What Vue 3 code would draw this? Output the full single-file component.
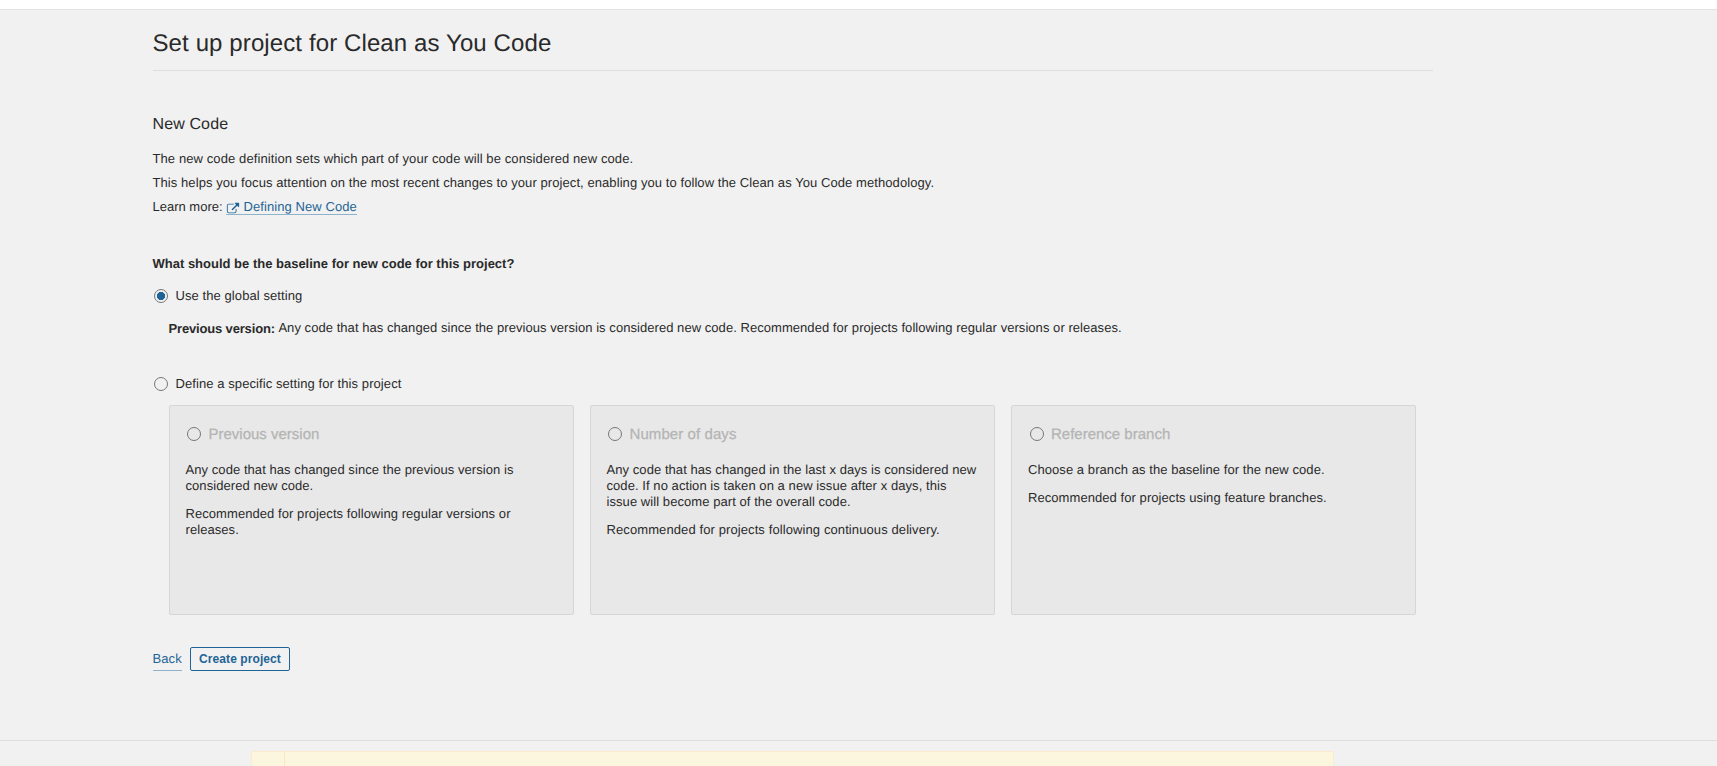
<script setup>
const options = [
  {
    title: 'Previous version',
    kind: 'version',
    paragraphs: [
      ['Any code that has changed since the previous version is', 'considered new code.'],
      ['Recommended for projects following regular versions or', 'releases.'],
    ],
  },
  {
    title: 'Number of days',
    kind: 'days',
    paragraphs: [
      [
        'Any code that has changed in the last x days is considered new',
        'code. If no action is taken on a new issue after x days, this',
        'issue will become part of the overall code.',
      ],
      ['Recommended for projects following continuous delivery.'],
    ],
  },
  {
    title: 'Reference branch',
    kind: 'branch',
    paragraphs: [
      ['Choose a branch as the baseline for the new code.'],
      ['Recommended for projects using feature branches.'],
    ],
  },
]
</script>

<template>
  <div class="page">
    <div class="topbar"></div>
    <main class="content">
      <header class="page-header">
        <h1>Set up project for Clean as You Code</h1>
      </header>

      <h2>New Code</h2>
      <div class="intro">
        <p class="definition">The new code definition sets which part of your code will be considered new code.</p>
        <p class="help">This helps you focus attention on the most recent changes to your project, enabling you to follow the Clean as You Code methodology.</p>
        <p class="learn">
          <span>Learn more:</span>
          <a class="doc-link">
            <svg class="external" width="14" height="14" viewBox="0 0 16 16">
              <path
                fill="currentColor"
                d="M12 9.25v2.5A2.25 2.25 0 0 1 9.75 14h-6.5A2.25 2.25 0 0 1 1 11.75v-6.5A2.25 2.25 0 0 1 3.25 3h5.5c.14 0 .25.11.25.25v.5c0 .14-.11.25-.25.25h-5.5C2.562 4 2 4.563 2 5.25v6.5c0 .688.563 1.25 1.25 1.25h6.5c.688 0 1.25-.563 1.25-1.25v-2.5c0-.14.11-.25.25-.25h.5c.14 0 .25.11.25.25zm3-6.75v4c0 .273-.227.5-.5.5a.497.497 0 0 1-.352-.148l-1.375-1.375L7.68 10.57a.27.27 0 0 1-.18.078.27.27 0 0 1-.18-.078l-.89-.89a.27.27 0 0 1-.078-.18.27.27 0 0 1 .078-.18l5.093-5.093-1.375-1.375A.497.497 0 0 1 10 2.5c0-.273.227-.5.5-.5h4c.273 0 .5.227.5.5z"
              />
            </svg>
            <span>Defining New Code</span>
          </a>
        </p>
      </div>

      <p class="question">What should be the baseline for new code for this project?</p>

      <div class="choice">
        <span class="radio checked"></span>
        <span class="choice-label">Use the global setting</span>
      </div>
      <p class="current">
        <strong>Previous version:</strong>
        <span>Any code that has changed since the previous version is considered new code. Recommended for projects following regular versions or releases.</span>
      </p>
      <div class="choice specific">
        <span class="radio"></span>
        <span class="choice-label">Define a specific setting for this project</span>
      </div>

      <div class="cards">
        <section v-for="option in options" :key="option.kind" class="card" :class="option.kind">
          <div class="card-head">
            <span class="radio"></span>
            <h3>{{ option.title }}</h3>
          </div>
          <p v-for="(lines, i) in option.paragraphs" :key="i">
            <span v-for="line in lines" :key="line" class="line">{{ line }}</span>
          </p>
        </section>
      </div>

      <div class="actions">
        <a class="back">Back</a>
        <button class="create" type="button">Create project</button>
      </div>
    </main>

    <footer class="footer">
      <div class="warning"><div class="warning-icon"></div></div>
    </footer>
  </div>
</template>

<style>
body {
  background: #f1f1f1;
  overflow: hidden;
}
</style>

<style scoped>
.page {
  display: flex;
  flex-direction: column;
  height: 766px;
  overflow: hidden;
  background: #f1f1f1;
  color: #2a2a2a;
  font: 13px/16px "Liberation Sans", Arial, sans-serif;
  text-rendering: geometricPrecision;
}
h1, h2, h3, p {
  margin: 0;
  font-weight: 400;
  white-space: nowrap;
}
.topbar {
  flex: none;
  height: 9px;
  background: #fff;
  border-bottom: 1px solid #e3e3e3;
}
.content {
  flex: none;
  box-sizing: border-box;
  width: 1280px;
  height: 730px;
  margin-left: 152.5px;
}
.page-header {
  box-sizing: border-box;
  height: 61px;
  padding-top: 20px;
  border-bottom: 1px solid #dedede;
}
h1 {
  font-size: 24px;
  line-height: 28px;
  letter-spacing: 0.11px;
}
h2 {
  margin-top: 44px;
  font-size: 16px;
  line-height: 20px;
  letter-spacing: 0.12px;
}
.intro {
  margin-top: 12px;
}
.intro p {
  height: 24px;
  line-height: 24px;
}
.definition {
  letter-spacing: 0.1px;
}
.help {
  letter-spacing: 0.076px;
}
.learn {
  display: flex;
  align-items: flex-start;
  gap: 3.5px;
}
.doc-link {
  display: flex;
  align-items: flex-start;
  box-sizing: border-box;
  height: 16px;
  line-height: 16px;
  margin-top: 4px;
  color: #1f6496;
  border-bottom: 1px solid #8fb3ca;
  letter-spacing: 0.07px;
}
.external {
  margin: 2px 3.5px 0 0;
}
.question {
  margin-top: 37px;
  font-weight: 700;
}
.choice {
  display: flex;
  align-items: center;
  height: 16px;
  margin-top: 16px;
  padding-left: 1.5px;
}
.radio {
  box-sizing: border-box;
  flex: none;
  width: 14px;
  height: 14px;
  border: 1px solid #777;
  border-radius: 50%;
}
.radio.checked {
  background: radial-gradient(circle, #1f6496 3.8px, transparent 4.4px);
}
.choice-label {
  margin-left: 7.5px;
  letter-spacing: 0.08px;
}
.current {
  display: flex;
  gap: 3.5px;
  margin: 16px 0 0 16px;
  letter-spacing: 0.051px;
}
.current strong {
  padding-top: 1px;
  letter-spacing: -0.16px;
}
.specific {
  margin-top: 39px;
}
.cards {
  display: grid;
  grid-template-columns: repeat(3, 405px);
  gap: 16px;
  margin: 13px 0 0 16.5px;
}
.card {
  box-sizing: border-box;
  height: 210px;
  padding: 19px 15.5px 0;
  background: #e8e8e8;
  border: 1px solid #d6d6d6;
  border-radius: 2px;
}
.card-head {
  display: flex;
  align-items: center;
  height: 18px;
  margin-bottom: 19px;
  padding-left: 1.5px;
}
.card-head h3 {
  margin-left: 7.5px;
  padding-top: 1px;
  color: #b4b4b4;
  font-size: 15px;
  line-height: 18px;
  -webkit-text-stroke: 0.25px #b4b4b4;
}
.card p {
  margin-bottom: 12px;
  letter-spacing: 0.065px;
}
.card.days h3 {
  letter-spacing: 0.08px;
}
.card.days p:last-child {
  letter-spacing: 0.1px;
}
.card.branch {
  padding-left: 16px;
}
.line {
  display: block;
}
.actions {
  display: flex;
  align-items: flex-start;
  gap: 8px;
  margin-top: 32px;
}
.back {
  box-sizing: border-box;
  width: 29.5px;
  height: 24px;
  line-height: 24px;
  color: #1f6496;
  border-bottom: 1px solid #8fb3ca;
  letter-spacing: 0.1px;
}
.create {
  box-sizing: border-box;
  width: 100px;
  height: 24px;
  padding: 0;
  background: transparent;
  border: 1px solid #1f6496;
  border-radius: 2px;
  color: #1f6496;
  font: 700 12px/22px "Liberation Sans", Arial, sans-serif;
  letter-spacing: 0.08px;
}
.footer {
  height: 26px;
  box-sizing: border-box;
  padding-top: 10px;
  border-top: 1px solid #dedede;
}
.warning {
  box-sizing: border-box;
  width: 1083px;
  height: 40px;
  margin-left: 251px;
  background: #fdf6de;
  border: 1px solid #faebcc;
  border-radius: 2px;
}
.warning-icon {
  width: 32px;
  height: 40px;
  border-right: 1px solid #fbe6c0;
}
</style>
